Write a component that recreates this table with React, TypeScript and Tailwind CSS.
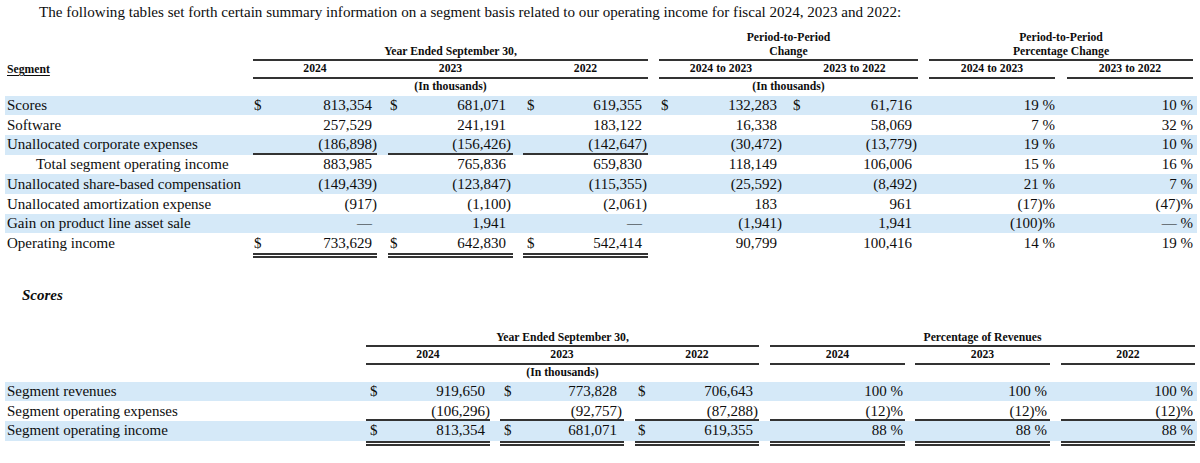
type Underline = 'none' | 'single' | 'double'

interface MoneyProps {
  value: string
  dollar?: boolean
  ul?: Underline
  pad: string
}

const LINE = 'border-[#333]'

function cellBox(ul: Underline) {
  if (ul === 'single') return 'h-[19.7px] border-b-2 border-[#333]'
  if (ul === 'double') return 'h-[24.7px] border-b-[5px] border-double border-[#333]'
  return 'h-[19.7px]'
}

// money cell: "$" on the left, number right aligned, closing paren hangs in its own slot
function Money({ value, dollar, ul = 'none', pad }: MoneyProps) {
  const neg = value.endsWith(')')
  const num = neg ? value.slice(0, -1) : value
  return (
    <div className={cellBox(ul)}>
      <div className={`h-[19.7px] flex items-center justify-between ${pad}`}>
        <span>{dollar ? '$' : ''}</span>
        <span className="flex">
          <span>{num}</span>
          <span className="w-[5px]">{neg ? ')' : ''}</span>
        </span>
      </div>
    </div>
  )
}

function Pct({ value, ul = 'none', pr }: { value: string; ul?: Underline; pr: string }) {
  return (
    <div className={cellBox(ul)}>
      <div className={`h-[19.7px] flex items-center justify-end ${pr}`}>{value}</div>
    </div>
  )
}

const topRows = [
  { label: 'Scores', band: true, d: 5, v: ['813,354', '681,071', '619,355', '132,283', '61,716'], p: ['19 %', '10 %'] },
  { label: 'Software', v: ['257,529', '241,191', '183,122', '16,338', '58,069'], p: ['7 %', '32 %'] },
  { label: 'Unallocated corporate expenses', band: true, ul: 'single' as Underline, v: ['(186,898)', '(156,426)', '(142,647)', '(30,472)', '(13,779)'], p: ['19 %', '10 %'] },
  { label: 'Total segment operating income', indent: true, v: ['883,985', '765,836', '659,830', '118,149', '106,006'], p: ['15 %', '16 %'] },
  { label: 'Unallocated share-based compensation', band: true, v: ['(149,439)', '(123,847)', '(115,355)', '(25,592)', '(8,492)'], p: ['21 %', '7 %'] },
  { label: 'Unallocated amortization expense', v: ['(917)', '(1,100)', '(2,061)', '183', '961'], p: ['(17)%', '(47)%'] },
  { label: 'Gain on product line asset sale', band: true, v: ['—', '1,941', '—', '(1,941)', '1,941'], p: ['(100)%', '— %'] },
  { label: 'Operating income', d: 3, ul: 'double' as Underline, v: ['733,629', '642,830', '542,414', '90,799', '100,416'], p: ['14 %', '19 %'] },
]

const scoreRows = [
  { label: 'Segment revenues', band: true, d: true, v: ['919,650', '773,828', '706,643'], p: ['100 %', '100 %', '100 %'] },
  { label: 'Segment operating expenses', ul: 'single' as Underline, v: ['(106,296)', '(92,757)', '(87,288)'], p: ['(12)%', '(12)%', '(12)%'] },
  { label: 'Segment operating income', band: true, d: true, ul: 'double' as Underline, v: ['813,354', '681,071', '619,355'], p: ['88 %', '88 %', '88 %'] },
]

const TOP_GRID = 'grid grid-cols-[248px_124px_11px_125px_10px_125px_11px_124px_135px_11px_126px_12px_126px_4px]'
const BOT_GRID = 'grid grid-cols-[361px_124px_10px_124px_11px_124px_11px_135px_10px_135px_11px_134px_2px]'

const head = 'text-[11.7px] font-bold leading-[14px] text-center'

export default function App() {
  return (
    <div className="w-[1200px] h-[463px] overflow-hidden bg-white text-[#0d0d0d] text-[15px] font-['Liberation_Serif',serif]">
      <p className="ml-[39px] pt-[4px] text-[15.1px] leading-[17px]">
        The following tables set forth certain summary information on a segment basis related to our operating income for fiscal 2024, 2023 and 2022:
      </p>

      {/* Segment table */}
      <div className="ml-[5px] w-[1192px]">
        <div className={`${TOP_GRID} h-[40px] items-end ${head}`}>
          <div />
          <div className={`col-span-5 border-b-2 ${LINE}`}>Year Ended September 30,</div>
          <div />
          <div className={`col-span-2 border-b-2 ${LINE}`}>
            Period-to-Period
            <br />
            Change
          </div>
          <div />
          <div className={`col-span-3 border-b-2 ${LINE}`}>
            Period-to-Period
            <br />
            Percentage Change
          </div>
          <div />
        </div>
        <div className={`${TOP_GRID} ${head}`}>
          <div className="pt-[2px] pl-[2px] text-left underline underline-offset-2">Segment</div>
          <div className={`pt-[1px] pb-[1px] border-b-2 ${LINE}`}>2024</div>
          <div className={`border-b-2 ${LINE}`} />
          <div className={`pt-[1px] pb-[1px] border-b-2 ${LINE}`}>2023</div>
          <div className={`border-b-2 ${LINE}`} />
          <div className={`pt-[1px] pb-[1px] border-b-2 ${LINE}`}>2022</div>
          <div />
          <div className={`pt-[1px] pb-[1px] border-b-2 ${LINE}`}>2024 to 2023</div>
          <div className={`pt-[1px] pb-[1px] pl-[8px] border-b-2 ${LINE}`}>2023 to 2022</div>
          <div />
          <div className={`pt-[1px] pb-[1px] border-b-2 ${LINE}`}>2024 to 2023</div>
          <div />
          <div className={`pt-[1px] pb-[1px] border-b-2 ${LINE}`}>2023 to 2022</div>
          <div />
        </div>
        <div className={`${TOP_GRID} h-[16.5px] pt-[1px] ${head}`}>
          <div />
          <div className="col-span-5">(In thousands)</div>
          <div />
          <div className="col-span-2">(In thousands)</div>
          <div />
          <div className="col-span-3" />
          <div />
        </div>

        {topRows.map((r) => {
          const ul = r.ul ?? 'none'
          const d = r.d ?? 0
          return (
            <div key={r.label} className={`${TOP_GRID} h-[19.7px] ${r.band ? 'bg-[#d5e9f8]' : ''}`}>
              <div className={`h-[19.7px] flex items-center ${r.indent ? 'pl-[31px]' : 'pl-[2px]'}`}>{r.label}</div>
              <Money value={r.v[0]} dollar={d >= 1} ul={ul} pad="pl-[1px] pr-[0px]" />
              <div />
              <Money value={r.v[1]} dollar={d >= 2} ul={ul} pad="pl-[2px] pr-[2px]" />
              <div />
              <Money value={r.v[2]} dollar={d >= 3} ul={ul} pad="pl-[4px] pr-[1px]" />
              <div />
              <Money value={r.v[3]} dollar={d >= 4} pad="pl-[2px] pr-[1px]" />
              <Money value={r.v[4]} dollar={d >= 5} pad="pl-[10px] pr-[1px]" />
              <div />
              <Pct value={r.p[0]} pr="pr-0" />
              <div />
              <Pct value={r.p[1]} pr="pr-0" />
              <div />
            </div>
          )
        })}
      </div>

      <p className="mt-[33px] pl-[22px] leading-[18px] font-bold italic">Scores</p>

      {/* Scores segment table */}
      <div className="mt-[3px] ml-[5px] w-[1192px]">
        <div className={`${BOT_GRID} h-[40px] items-end ${head}`}>
          <div />
          <div className={`col-span-5 border-b-2 ${LINE}`}>Year Ended September 30,</div>
          <div />
          <div className={`col-span-5 border-b-2 ${LINE}`}>Percentage of Revenues</div>
          <div />
        </div>
        <div className={`${BOT_GRID} ${head}`}>
          <div />
          <div className={`pt-[1px] pb-[1px] border-b-2 ${LINE}`}>2024</div>
          <div className={`border-b-2 ${LINE}`} />
          <div className={`pt-[1px] pb-[1px] border-b-2 ${LINE}`}>2023</div>
          <div className={`border-b-2 ${LINE}`} />
          <div className={`pt-[1px] pb-[1px] border-b-2 ${LINE}`}>2022</div>
          <div />
          <div className={`pt-[1px] pb-[1px] border-b-2 ${LINE}`}>2024</div>
          <div />
          <div className={`pt-[1px] pb-[1px] border-b-2 ${LINE}`}>2023</div>
          <div />
          <div className={`pt-[1px] pb-[1px] border-b-2 ${LINE}`}>2022</div>
          <div />
        </div>
        <div className={`${BOT_GRID} h-[16.5px] pt-[1px] ${head}`}>
          <div />
          <div className="col-span-5">(In thousands)</div>
          <div />
          <div className="col-span-5" />
          <div />
        </div>

        {scoreRows.map((r) => {
          const ul = r.ul ?? 'none'
          return (
            <div key={r.label} className={`${BOT_GRID} h-[19.7px] ${r.band ? 'bg-[#d5e9f8]' : ''}`}>
              <div className="h-[19.7px] flex items-center pl-[2px]">{r.label}</div>
              <Money value={r.v[0]} dollar={r.d} ul={ul} pad="pl-[4px] pr-0" />
              <div />
              <Money value={r.v[1]} dollar={r.d} ul={ul} pad="pl-[4px] pr-[2px]" />
              <div />
              <Money value={r.v[2]} dollar={r.d} ul={ul} pad="pl-[3px] pr-[1px]" />
              <div />
              <Pct value={r.p[0]} ul={ul} pr="pr-[2px]" />
              <div />
              <Pct value={r.p[1]} ul={ul} pr="pr-[3px]" />
              <div />
              <Pct value={r.p[2]} ul={ul} pr="pr-[2px]" />
              <div />
            </div>
          )
        })}
      </div>
    </div>
  )
}
